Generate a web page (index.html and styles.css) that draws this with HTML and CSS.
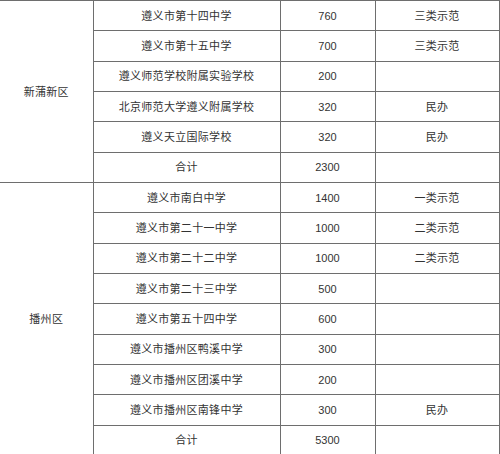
FILE: index.html
```html
<!DOCTYPE html>
<html lang="zh">
<head>
<meta charset="utf-8">
<title>学校招生计划</title>
<link rel="stylesheet" href="styles.css">
</head>
<body>
<table class="plan">
  <colgroup>
    <col class="c-area">
    <col class="c-name">
    <col class="c-num">
    <col class="c-type">
  </colgroup>
  <tbody>
    <tr><td class="area" rowspan="6">新蒲新区</td><td class="name">遵义市第十四中学</td><td class="num">760</td><td class="type">三类示范</td></tr>
    <tr><td class="name">遵义市第十五中学</td><td class="num">700</td><td class="type">三类示范</td></tr>
    <tr><td class="name">遵义师范学校附属实验学校</td><td class="num">200</td><td class="type"></td></tr>
    <tr><td class="name">北京师范大学遵义附属学校</td><td class="num">320</td><td class="type">民办</td></tr>
    <tr><td class="name">遵义天立国际学校</td><td class="num">320</td><td class="type">民办</td></tr>
    <tr><td class="name">合计</td><td class="num">2300</td><td class="type"></td></tr>
    <tr><td class="area" rowspan="9">播州区</td><td class="name">遵义市南白中学</td><td class="num">1400</td><td class="type">一类示范</td></tr>
    <tr><td class="name">遵义市第二十一中学</td><td class="num">1000</td><td class="type">二类示范</td></tr>
    <tr><td class="name">遵义市第二十二中学</td><td class="num">1000</td><td class="type">二类示范</td></tr>
    <tr><td class="name">遵义市第二十三中学</td><td class="num">500</td><td class="type"></td></tr>
    <tr><td class="name">遵义市第五十四中学</td><td class="num">600</td><td class="type"></td></tr>
    <tr><td class="name">遵义市播州区鸭溪中学</td><td class="num">300</td><td class="type"></td></tr>
    <tr><td class="name">遵义市播州区团溪中学</td><td class="num">200</td><td class="type"></td></tr>
    <tr><td class="name">遵义市播州区南锋中学</td><td class="num">300</td><td class="type">民办</td></tr>
    <tr><td class="name">合计</td><td class="num">5300</td><td class="type"></td></tr>
  </tbody>
</table>
</body>
</html>
```
FILE: styles.css
```css
html, body {
  margin: 0;
  padding: 0;
  background: #ffffff;
}

body {
  font-family: "Liberation Sans", "Noto Sans CJK SC", sans-serif;
  font-size: 11px;
  color: #333333;
  overflow: hidden;
}

.plan {
  border-collapse: collapse;
  table-layout: fixed;
  width: 499px;
}

.c-area { width: 93px; }
.c-name { width: 187px; }
.c-num { width: 95px; }
.c-type { width: 124px; }

.plan tr {
  height: 30.35px;
}

.plan td {
  padding: 0;
  border: 1px solid #6e6e6e;
  text-align: center;
  vertical-align: middle;
  white-space: nowrap;
  line-height: 14px;
}

.plan td.area {
  border-left: none;
  letter-spacing: 0.3px;
}

.plan td.name,
.plan td.type {
  letter-spacing: 0.3px;
}

.plan td.num {
  font-size: 11px;
}
```
